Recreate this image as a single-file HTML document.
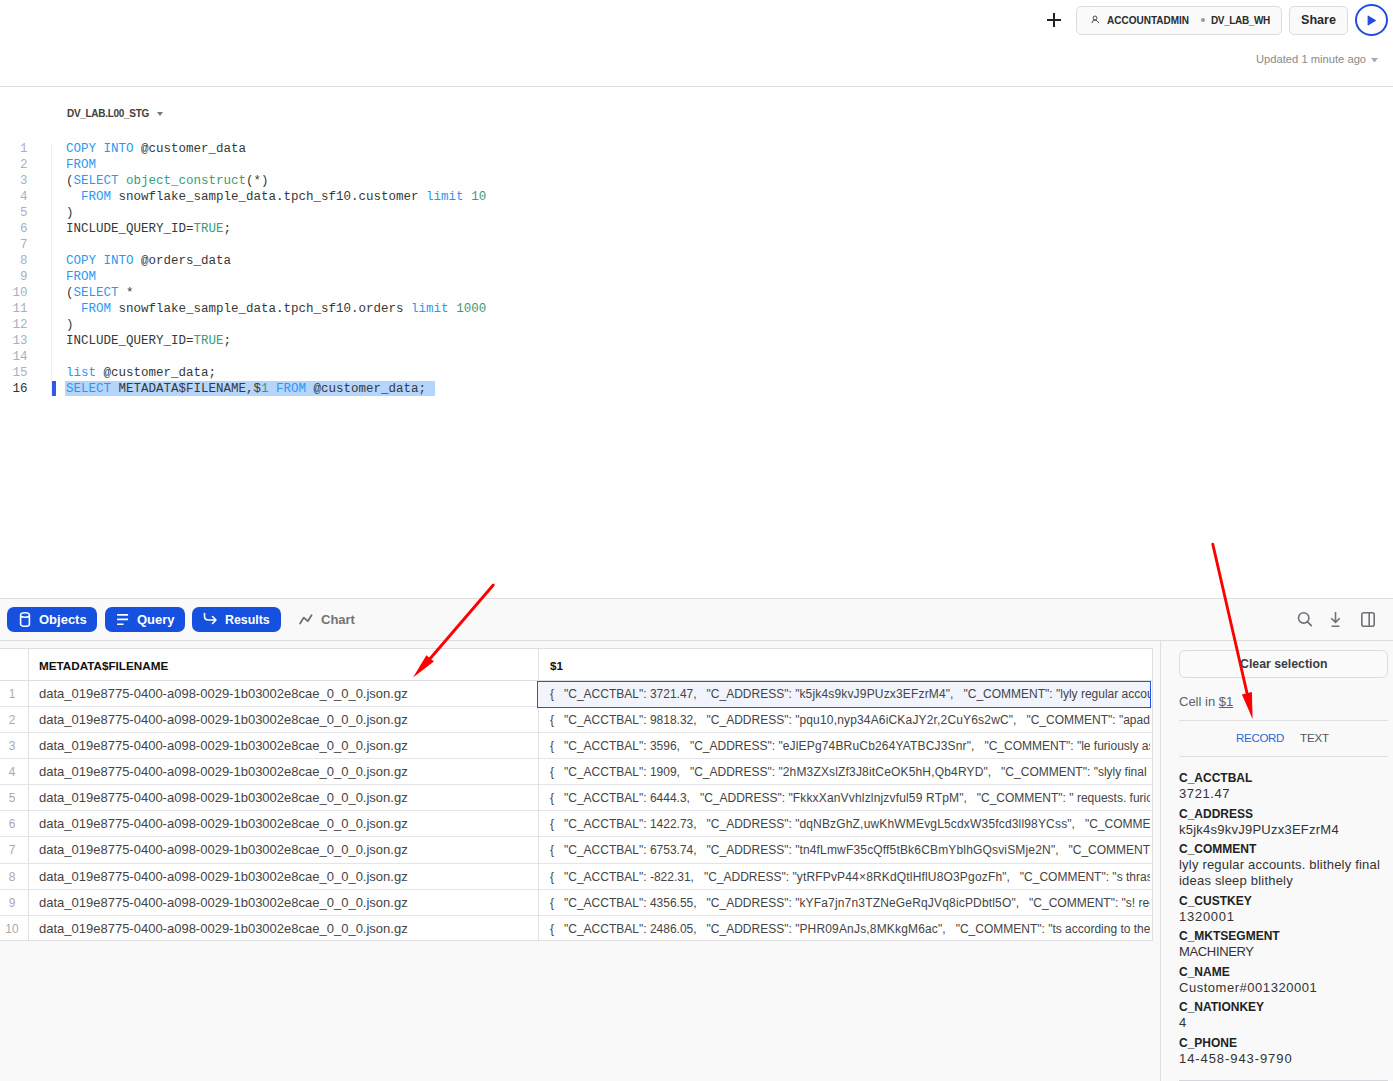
<!DOCTYPE html>
<html><head><meta charset="utf-8">
<style>
*{box-sizing:border-box;margin:0;padding:0}
html,body{width:1393px;height:1081px;overflow:hidden;background:#fff;font-family:"Liberation Sans",sans-serif;color:#333}
.a{position:absolute}
.t{white-space:pre;line-height:1}
/* header */
#plus1{left:1047px;top:19px;width:14px;height:2px;background:#222}
#plus2{left:1053px;top:13px;width:2px;height:14px;background:#222}
#ctx{left:1076px;top:6px;width:206px;height:29px;border:1px solid #dcdcdc;border-radius:5px;background:#fafafa}
#share{left:1289px;top:6px;width:59px;height:29px;border:1px solid #dcdcdc;border-radius:5px;background:#fafafa}
#run{left:1355px;top:4px;width:33px;height:32px;border:2px solid #1f4fdc;border-radius:50%}
#hline{left:0;top:86px;width:1393px;height:1px;background:#dedede}
/* code */
.ln{position:absolute;left:0;width:27.5px;text-align:right;font-family:"Liberation Mono",monospace;font-size:12.5px;line-height:16px;color:#a9b0bd}
.cl{position:absolute;left:66px;font-family:"Liberation Mono",monospace;font-size:12.5px;line-height:16px;color:#383838;white-space:pre}
.k{color:#2899f3}
.g{color:#389c7a}
/* bottom */
#bottom{left:0;top:598px;width:1393px;height:483px;background:#f9f9f9;border-top:1px solid #dddde0}
#tb2{left:0;top:640px;width:1393px;height:1px;background:#dddde0}
.btn{position:absolute;top:607px;height:25px;border-radius:7px;background:#1650de;color:#fff;font-weight:700;font-size:13px}
.btn span{position:absolute;top:6px;white-space:pre;line-height:1}
.row{position:absolute;left:0;width:1152px;background:#fff;border-bottom:1px solid #dedfe3}
.rn{position:absolute;left:0;width:24px;text-align:center;font-size:12px;color:#aaa;white-space:pre}
.c1{position:absolute;left:39px;font-size:13px;color:#444;white-space:pre}
.c2{position:absolute;left:550px;width:600px;overflow:hidden;font-size:12px;color:#444;white-space:pre;line-height:16px}
.key{position:absolute;left:1179px;font-size:12px;font-weight:700;color:#222;white-space:pre;line-height:1}
.val{position:absolute;left:1179px;font-size:13px;color:#333;white-space:pre;line-height:1}
</style></head><body>

<!-- header -->
<div class="a" id="plus1"></div><div class="a" id="plus2"></div>
<div class="a" id="ctx"></div>
<svg class="a" style="left:1091px;top:15px" width="9" height="9" viewBox="0 0 9 9"><circle cx="4" cy="3" r="1.95" fill="none" stroke="#444" stroke-width="0.95"/><path d="M1.1 7.7 L2 5.7 Q4 4.5 6 5.7 L7.6 7.7" fill="none" stroke="#444" stroke-width="0.95" stroke-linecap="round"/></svg>
<div class="a t" style="left:1107px;top:16px;font-size:10px;font-weight:700;color:#2a2a2a">ACCOUNTADMIN</div>
<div class="a" style="left:1201px;top:18px;width:4px;height:4px;border-radius:50%;background:#9a9a9a"></div>
<div class="a t" style="left:1211px;top:16px;font-size:10px;letter-spacing:-0.37px;font-weight:700;color:#2a2a2a">DV_LAB_WH</div>
<div class="a" id="share"></div>
<div class="a t" style="left:1301px;top:14px;font-size:12.6px;font-weight:700;color:#2a2a2a">Share</div>
<div class="a" id="run"></div>
<svg class="a" style="left:1367px;top:15px" width="10" height="11" viewBox="0 0 10 11"><path d="M1.2 1.2 L8.3 5.5 L1.2 9.8 Z" fill="#1f4fdc" stroke="#1f4fdc" stroke-width="1.2" stroke-linejoin="round"/></svg>
<div class="a t" style="left:1256px;top:54px;font-size:11.2px;color:#8a8a8a">Updated 1 minute ago</div>
<svg class="a" style="left:1371px;top:58px" width="7" height="5" viewBox="0 0 7 5"><path d="M0 0 L7 0 L3.5 4.5Z" fill="#aaa"/></svg>
<div class="a" id="hline"></div>

<!-- editor -->
<div class="a t" style="left:67px;top:108.5px;font-size:10px;letter-spacing:-0.3px;font-weight:700;color:#404040">DV_LAB.L00_STG</div>
<svg class="a" style="left:157px;top:112px" width="7" height="5" viewBox="0 0 7 5"><path d="M0 0 L6 0 L3 4Z" fill="#777"/></svg>
<div class="a" style="left:51px;top:143px;width:1px;height:254px;background:#eef0f4"></div>
<div class="a" style="left:65px;top:381px;width:370px;height:15px;background:#b5d5fb"></div>
<div class="a" style="left:52px;top:381px;width:4px;height:15px;background:#3355f0"></div>
<div class="ln" style="top:141px">1</div>
<div class="cl" style="top:141px"><span class="k">COPY INTO</span> @customer_data</div>
<div class="ln" style="top:157px">2</div>
<div class="cl" style="top:157px"><span class="k">FROM</span></div>
<div class="ln" style="top:173px">3</div>
<div class="cl" style="top:173px">(<span class="k">SELECT</span> <span class="g">object_construct</span>(*)</div>
<div class="ln" style="top:189px">4</div>
<div class="cl" style="top:189px">  <span class="k">FROM</span> snowflake_sample_data.tpch_sf10.customer <span class="k">limit</span> <span class="g">10</span></div>
<div class="ln" style="top:205px">5</div>
<div class="cl" style="top:205px">)</div>
<div class="ln" style="top:221px">6</div>
<div class="cl" style="top:221px">INCLUDE_QUERY_ID=<span class="g">TRUE</span>;</div>
<div class="ln" style="top:237px">7</div>
<div class="cl" style="top:237px"></div>
<div class="ln" style="top:253px">8</div>
<div class="cl" style="top:253px"><span class="k">COPY INTO</span> @orders_data</div>
<div class="ln" style="top:269px">9</div>
<div class="cl" style="top:269px"><span class="k">FROM</span></div>
<div class="ln" style="top:285px">10</div>
<div class="cl" style="top:285px">(<span class="k">SELECT</span> *</div>
<div class="ln" style="top:301px">11</div>
<div class="cl" style="top:301px">  <span class="k">FROM</span> snowflake_sample_data.tpch_sf10.orders <span class="k">limit</span> <span class="g">1000</span></div>
<div class="ln" style="top:317px">12</div>
<div class="cl" style="top:317px">)</div>
<div class="ln" style="top:333px">13</div>
<div class="cl" style="top:333px">INCLUDE_QUERY_ID=<span class="g">TRUE</span>;</div>
<div class="ln" style="top:349px">14</div>
<div class="cl" style="top:349px"></div>
<div class="ln" style="top:365px">15</div>
<div class="cl" style="top:365px"><span class="k">list</span> @customer_data;</div>
<div class="ln" style="top:381px;color:#333">16</div>
<div class="cl" style="top:381px"><span class="k">SELECT</span> METADATA$FILENAME,$<span class="g">1</span> <span class="k">FROM</span> @customer_data;</div>

<!-- bottom panel -->
<div class="a" id="bottom"></div>
<div class="a" id="tb2"></div>
<div class="btn" style="left:7px;width:90px"><span style="left:32px">Objects</span></div>
<svg class="a" style="left:18px;top:611px" width="14" height="17" viewBox="0 0 14 17"><path d="M2.6 4 C2.6 1 11.4 1 11.4 4 L11.4 13.2 C11.4 16 2.6 16 2.6 13.2 Z M2.6 4 C2.6 7 11.4 7 11.4 4" fill="none" stroke="#fff" stroke-width="1.6"/></svg>
<div class="btn" style="left:105px;width:80px"><span style="left:32px">Query</span></div>
<svg class="a" style="left:115px;top:612px" width="14" height="15" viewBox="0 0 14 15"><path d="M2.1 2.9 H13.1 M2.1 7.4 H13.1 M2.1 12.2 H8.6" fill="none" stroke="#fff" stroke-width="1.6"/></svg>
<div class="btn" style="left:192px;width:89px"><span style="left:33px;font-size:12.4px;top:6.5px">Results</span></div>
<svg class="a" style="left:202px;top:611px" width="16" height="15" viewBox="0 0 16 15"><path d="M2.5 2.5 V5.2 C2.5 7.5 4 9 6.5 9 H14 M10.5 5.5 L14 9 L10.5 12.5" fill="none" stroke="#fff" stroke-width="1.6" stroke-linecap="round" stroke-linejoin="round"/></svg>
<svg class="a" style="left:299px;top:613px" width="14" height="13" viewBox="0 0 14 13"><path d="M1.1 10.5 L4.8 4.6 L8.8 8.2 L12.5 2.2" fill="none" stroke="#6e7178" stroke-width="1.8" stroke-linecap="round" stroke-linejoin="round"/></svg>
<div class="a t" style="left:321px;top:613px;font-size:13px;font-weight:700;color:#72757b">Chart</div>
<svg class="a" style="left:1296px;top:610px" width="18" height="18" viewBox="0 0 18 18"><circle cx="7.7" cy="7.9" r="5.2" fill="none" stroke="#6e7178" stroke-width="1.6"/><path d="M11.5 11.8 L15.3 15.6" stroke="#6e7178" stroke-width="1.7" stroke-linecap="round"/></svg>
<svg class="a" style="left:1329px;top:610px" width="13" height="18" viewBox="0 0 13 18"><path d="M6.5 2 V12.2 M2.3 8.2 L6.5 12.4 L10.7 8.2 M2.6 16.2 H10.4" fill="none" stroke="#6e7178" stroke-width="1.6"/></svg>
<svg class="a" style="left:1360px;top:611px" width="16" height="17" viewBox="0 0 16 17"><rect x="1.8" y="1.8" width="12.4" height="13.4" rx="2" fill="none" stroke="#6e7178" stroke-width="1.6"/><path d="M9.2 1.8 V15.2" stroke="#6e7178" stroke-width="1.6"/></svg>

<div class="a" style="left:0;top:648px;width:1152px;height:293px;background:#fff;border-top:1px solid #dedfe3;border-bottom:1px solid #dedfe3"></div>
<div class="a" style="left:1152px;top:648px;width:1px;height:293px;background:#dedfe3"></div>
<div class="a" style="left:0;top:680px;width:1152px;height:1px;background:#dedfe3"></div>
<div class="a" style="left:0;top:706px;width:1152px;height:1px;background:#e4e5e8"></div>
<div class="a" style="left:0;top:732px;width:1152px;height:1px;background:#e4e5e8"></div>
<div class="a" style="left:0;top:758px;width:1152px;height:1px;background:#e4e5e8"></div>
<div class="a" style="left:0;top:784px;width:1152px;height:1px;background:#e4e5e8"></div>
<div class="a" style="left:0;top:810px;width:1152px;height:1px;background:#e4e5e8"></div>
<div class="a" style="left:0;top:836px;width:1152px;height:1px;background:#e4e5e8"></div>
<div class="a" style="left:0;top:863px;width:1152px;height:1px;background:#e4e5e8"></div>
<div class="a" style="left:0;top:889px;width:1152px;height:1px;background:#e4e5e8"></div>
<div class="a" style="left:0;top:915px;width:1152px;height:1px;background:#e4e5e8"></div>
<div class="a" style="left:28px;top:649px;width:1px;height:292px;background:#e0e1e5"></div>
<div class="a" style="left:538px;top:649px;width:1px;height:292px;background:#e0e1e5"></div>
<div class="a t" style="left:39px;top:660px;font-size:11.7px;font-weight:700;color:#111">METADATA$FILENAME</div>
<div class="a t" style="left:550px;top:660px;font-size:11.7px;font-weight:700;color:#111">$1</div>
<div class="a" style="left:537px;top:681px;width:614px;height:27px;border:1.5px solid #1f55e0;background:#f1f4fd"></div>
<div class="rn t" style="top:688px">1</div>
<div class="c1 t" style="top:687px">data_019e8775-0400-a098-0029-1b03002e8cae_0_0_0.json.gz</div>
<div class="c2 t" style="top:686px">{   "C_ACCTBAL": 3721.47,   "C_ADDRESS": "<span style="letter-spacing:0.17px">k5jk4s9kvJ9PUzx3EFzrM4</span>",   "C_COMMENT": "lyly regular accounts. blithely final ideas sleep blithely</div>
<div class="rn t" style="top:714px">2</div>
<div class="c1 t" style="top:713px">data_019e8775-0400-a098-0029-1b03002e8cae_0_0_0.json.gz</div>
<div class="c2 t" style="top:712px">{   "C_ACCTBAL": 9818.32,   "C_ADDRESS": "<span style="letter-spacing:0.17px">pqu10,nyp34A6iCKaJY2r,2CuY6s2wC</span>",   "C_COMMENT": "apadly final deposits</div>
<div class="rn t" style="top:740px">3</div>
<div class="c1 t" style="top:739px">data_019e8775-0400-a098-0029-1b03002e8cae_0_0_0.json.gz</div>
<div class="c2 t" style="top:738px">{   "C_ACCTBAL": 3596,   "C_ADDRESS": "<span style="letter-spacing:0.17px">eJlEPg74BRuCb264YATBCJ3Snr</span>",   "C_COMMENT": "le furiously asymptotes</div>
<div class="rn t" style="top:766px">4</div>
<div class="c1 t" style="top:765px">data_019e8775-0400-a098-0029-1b03002e8cae_0_0_0.json.gz</div>
<div class="c2 t" style="top:764px">{   "C_ACCTBAL": 1909,   "C_ADDRESS": "<span style="letter-spacing:0.17px">2hM3ZXslZf3J8itCeOK5hH,Qb4RYD</span>",   "C_COMMENT": "slyly final accounts</div>
<div class="rn t" style="top:792px">5</div>
<div class="c1 t" style="top:791px">data_019e8775-0400-a098-0029-1b03002e8cae_0_0_0.json.gz</div>
<div class="c2 t" style="top:790px">{   "C_ACCTBAL": 6444.3,   "C_ADDRESS": "<span style="letter-spacing:0.17px">FkkxXanVvhlzlnjzvful59 RTpM</span>",   "C_COMMENT": " requests. furiously</div>
<div class="rn t" style="top:818px">6</div>
<div class="c1 t" style="top:817px">data_019e8775-0400-a098-0029-1b03002e8cae_0_0_0.json.gz</div>
<div class="c2 t" style="top:816px">{   "C_ACCTBAL": 1422.73,   "C_ADDRESS": "<span style="letter-spacing:0.17px">dqNBzGhZ,uwKhWMEvgL5cdxW35fcd3ll98YCss</span>",   "C_COMMENT": "regular</div>
<div class="rn t" style="top:844px">7</div>
<div class="c1 t" style="top:843px">data_019e8775-0400-a098-0029-1b03002e8cae_0_0_0.json.gz</div>
<div class="c2 t" style="top:842px">{   "C_ACCTBAL": 6753.74,   "C_ADDRESS": "<span style="letter-spacing:0.17px">tn4fLmwF35cQff5tBk6CBmYblhGQsviSMje2N</span>",   "C_COMMENT": "regular</div>
<div class="rn t" style="top:871px">8</div>
<div class="c1 t" style="top:870px">data_019e8775-0400-a098-0029-1b03002e8cae_0_0_0.json.gz</div>
<div class="c2 t" style="top:869px">{   "C_ACCTBAL": -822.31,   "C_ADDRESS": "<span style="letter-spacing:0.17px">ytRFPvP44×8RKdQtlHflU8O3PgozFh</span>",   "C_COMMENT": "s thrash</div>
<div class="rn t" style="top:897px">9</div>
<div class="c1 t" style="top:896px">data_019e8775-0400-a098-0029-1b03002e8cae_0_0_0.json.gz</div>
<div class="c2 t" style="top:895px">{   "C_ACCTBAL": 4356.55,   "C_ADDRESS": "<span style="letter-spacing:0.17px">kYFa7jn7n3TZNeGeRqJVq8icPDbtl5O</span>",   "C_COMMENT": "s! regular</div>
<div class="rn t" style="top:923px">10</div>
<div class="c1 t" style="top:922px">data_019e8775-0400-a098-0029-1b03002e8cae_0_0_0.json.gz</div>
<div class="c2 t" style="top:921px">{   "C_ACCTBAL": 2486.05,   "C_ADDRESS": "<span style="letter-spacing:0.17px">PHR09AnJs,8MKkgM6ac</span>",   "C_COMMENT": "ts according to the</div>
<div class="a" style="left:1160px;top:641px;width:1px;height:440px;background:#dedfe3"></div>
<div class="a" style="left:1179px;top:650px;width:209px;height:28px;border:1px solid #dcdcdc;border-radius:6px;background:#fafafa"></div>
<div class="a t" style="left:1240px;top:658px;font-size:12.3px;font-weight:700;color:#3a3d42">Clear selection</div>
<div class="a t" style="left:1179px;top:695px;font-size:13px;color:#5e6166">Cell in <span style="text-decoration:underline">$1</span></div>
<div class="a" style="left:1179px;top:720px;width:209px;height:1px;background:#e0e0e0"></div>
<div class="a t" style="left:1236px;top:731.5px;font-size:11.6px;letter-spacing:-0.35px;color:#2d66d8">RECORD</div>
<div class="a t" style="left:1300px;top:731.5px;font-size:11.6px;letter-spacing:-0.2px;color:#55585c">TEXT</div>
<div class="a" style="left:1179px;top:756px;width:209px;height:1px;background:#e0e0e0"></div>
<div class="key" style="top:772px">C_ACCTBAL</div>
<div class="val" style="top:787px;letter-spacing:0.6px">3721.47</div>
<div class="key" style="top:808px">C_ADDRESS</div>
<div class="val" style="top:823px;letter-spacing:0.24px">k5jk4s9kvJ9PUzx3EFzrM4</div>
<div class="key" style="top:843px">C_COMMENT</div>
<div class="val" style="top:858px;letter-spacing:0.2px">lyly regular accounts. blithely final</div>
<div class="val" style="top:874px;letter-spacing:0.2px">ideas sleep blithely</div>
<div class="key" style="top:895px">C_CUSTKEY</div>
<div class="val" style="top:910px;letter-spacing:0.73px">1320001</div>
<div class="key" style="top:930px">C_MKTSEGMENT</div>
<div class="val" style="top:945px;letter-spacing:-0.35px">MACHINERY</div>
<div class="key" style="top:966px">C_NAME</div>
<div class="val" style="top:981px;letter-spacing:0.53px">Customer#001320001</div>
<div class="key" style="top:1001px">C_NATIONKEY</div>
<div class="val" style="top:1016px;letter-spacing:0px">4</div>
<div class="key" style="top:1037px">C_PHONE</div>
<div class="val" style="top:1052px;letter-spacing:0.92px">14-458-943-9790</div>
<div class="a" style="left:1179px;top:1080px;width:209px;height:1px;background:#d6d7db"></div>
<svg class="a" style="left:0;top:0" width="1393" height="1081" viewBox="0 0 1393 1081">
<path d="M493.3 585 L430.2 658.5" stroke="#f00" stroke-width="2.9" stroke-linecap="round"/>
<path d="M413 677.5 L426.4 655.3 L433.9 661.6 Z" fill="#f00"/>
<path d="M1212.8 544.2 L1247 693" stroke="#f00" stroke-width="2.9" stroke-linecap="round"/>
<path d="M1252.6 719 L1241.9 694.6 L1251.9 691.9 Z" fill="#f00"/>
</svg>
</body></html>
